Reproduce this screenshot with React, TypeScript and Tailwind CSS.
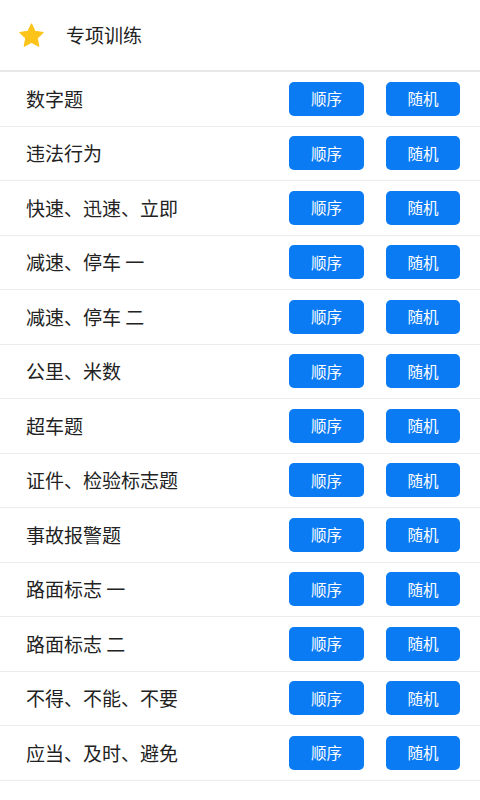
const items = [
  "数字题",
  "违法行为",
  "快速、迅速、立即",
  "减速、停车 一",
  "减速、停车 二",
  "公里、米数",
  "超车题",
  "证件、检验标志题",
  "事故报警题",
  "路面标志 一",
  "路面标志 二",
  "不得、不能、不要",
  "应当、及时、避免",
];

function Star() {
  return (
    <svg width="27" height="25" viewBox="0 0 24 23">
      <path
        d="M12 0.8l3.3 6.9 7.5 1-5.5 5.2 1.4 7.5L12 17.8l-6.7 3.6 1.4-7.5L1.2 8.7l7.5-1z"
        fill="#fcc419"
        stroke="#fcc419"
        strokeWidth="1"
        strokeLinejoin="round"
      />
    </svg>
  );
}

export default function App() {
  return (
    <div className="min-h-[800px] w-[480px] bg-white font-['Noto_Sans_CJK_SC',sans-serif]">
      <div className="flex h-[72px] items-center border-b-2 border-[#e8e8e8] pl-[18px]">
        <Star />
        <span className="ml-[21px] text-[19px] text-[#222]">专项训练</span>
      </div>
      {items.map((label) => (
        <div
          key={label}
          className="flex h-[54.5px] items-center border-b-[1.5px] border-[#ececec] pl-[26px] pr-[20px]"
        >
          <span className="flex-1 text-[19px] text-[#222]">{label}</span>
          <button className="h-[34px] w-[75px] rounded-[5px] bg-[#0b7bf4] text-[15.5px] text-white">
            顺序
          </button>
          <button className="ml-[22px] h-[34px] w-[74px] rounded-[5px] bg-[#0b7bf4] text-[15.5px] text-white">
            随机
          </button>
        </div>
      ))}
    </div>
  );
}
